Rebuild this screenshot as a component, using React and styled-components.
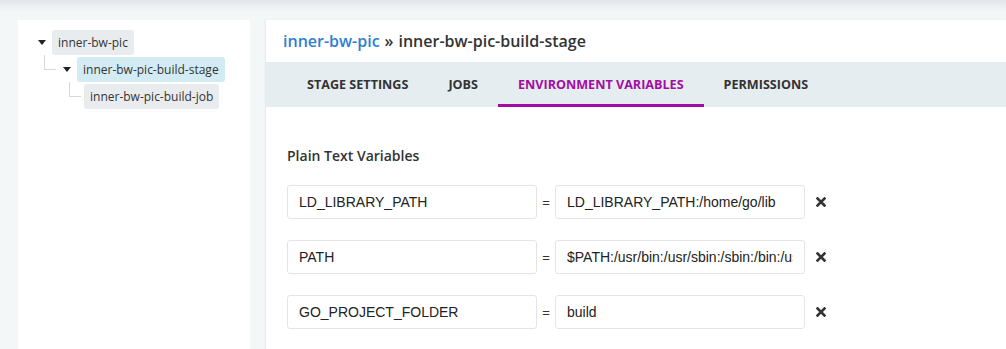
import React from 'react';
import styled, {createGlobalStyle} from 'styled-components';

const GlobalStyle = createGlobalStyle`
    html, body {
        margin: 0;
        padding: 0;
        background: #f4f7f8;
        font-family: "Open Sans", sans-serif;
        color: #333;
    }
`

const Page = styled.div`
    min-height: 349px;
    background: #f4f7f8;
    display: flex;
    flex-direction: column;
`

const TopShade = styled.div`
    height: 20px;
    background: linear-gradient(to bottom, #e3e6e8 0px, #f4f7f8 12px);
`

const Columns = styled.div`
    flex: 1;
    display: flex;
    gap: 16px;
    padding-left: 18px;
`

const Sidebar = styled.div`
    width: 232px;
    min-height: 329px;
    background: #fff;
    padding: 10px 0 0 20px;
    box-sizing: border-box;
`

const Tree = styled.ul`
    list-style: none;
    margin: 0;
    padding: 0;
`

const Node = styled.li`
    position: relative;
    padding-left: ${p => p.$indent}px;
    margin-top: ${p => p.$top}px;
`

const Row = styled.div`
    display: flex;
    align-items: center;
    gap: 6px;
`

const Caret = styled.span`
    width: 0;
    height: 0;
    border-left: 4px solid transparent;
    border-right: 4px solid transparent;
    border-top: 5px solid #222;
`

const Label = styled.span`
    display: inline-block;
    white-space: nowrap;
    font-size: 12px;
    line-height: 25px;
    padding: 0 6px;
    border-radius: 3px;
    color: #333;
    background: ${p => p.$selected ? '#d3ebf2' : '#e9ecef'};
`

const Connector = styled.span`
    position: absolute;
    left: ${p => p.$left}px;
    top: -2px;
    width: 11px;
    height: 14px;
    border-left: 1px solid #d5d9dc;
    border-bottom: 1px solid #d5d9dc;
`

const Main = styled.div`
    flex: 1;
    background: #fff;
    box-shadow: -1px 0 2px rgba(0,0,0,0.06);
`

const Title = styled.h1`
    margin: 0;
    height: 42px;
    display: flex;
    align-items: center;
    padding-left: 17px;
    font-size: 16px;
    font-weight: 600;
    color: #333;
    gap: 5px;
`

const Crumb = styled.span`
    color: #2e7fd4;
`

const Tabs = styled.div`
    display: flex;
    height: 45px;
    background: #e6edf0;
    padding-left: 21px;
`

const Tab = styled.div`
    padding: 0 20px;
    display: flex;
    align-items: center;
    font-size: 12.6px;
    font-weight: 700;
    text-transform: uppercase;
    color: ${p => p.$active ? '#a30ca4' : '#333'};
    border-bottom: 3px solid ${p => p.$active ? '#a30ca4' : 'transparent'};
    padding-top: 2px;
    box-sizing: border-box;
`

const Body = styled.div`
    padding: 37px 21px 0 21px;
`

const SectionTitle = styled.h3`
    margin: 0 0 17px 0;
    font-size: 14px;
    font-weight: 600;
    color: #333;
    line-height: 24px;
`

const VarRow = styled.div`
    display: flex;
    align-items: center;
    margin-bottom: 21px;
`

const Field = styled.input`
    width: 250px;
    height: 34px;
    box-sizing: border-box;
    border: 1px solid #e2e4e6;
    border-radius: 3px;
    padding: 0 11px;
    font-family: "Liberation Sans", Arial, sans-serif;
    font-size: 14px;
    color: #222;
    outline: none;
`

const Equals = styled.span`
    width: 18px;
    text-align: center;
    font-family: "Liberation Sans", Arial, sans-serif;
    font-size: 13px;
    color: #333;
`

const Remove = styled.button`
    border: 0;
    background: none;
    padding: 0;
    margin-left: 11px;
    width: 10px;
    height: 10px;
    display: flex;
    cursor: pointer;
`

const CloseIcon = () => (
    <svg width="10" height="10" viewBox="0 0 10 10">
        <path d="M1.5 1.5 L8.5 8.5 M8.5 1.5 L1.5 8.5" stroke="#333" strokeWidth="2.6" strokeLinecap="square"/>
    </svg>
)

const vars = [
    {name: 'LD_LIBRARY_PATH', value: 'LD_LIBRARY_PATH:/home/go/lib'},
    {name: 'PATH', value: '$PATH:/usr/bin:/usr/sbin:/sbin:/bin:/usr/local/bin'},
    {name: 'GO_PROJECT_FOLDER', value: 'build'},
]

const tabs = ['Stage Settings', 'Jobs', 'Environment Variables', 'Permissions']

export default function App() {
    return (
        <Page>
            <GlobalStyle/>
            <TopShade/>
            <Columns>
                <Sidebar>
                    <Tree>
                        <Node $indent={0} $top={0}>
                            <Row><Caret/><Label>inner-bw-pic</Label></Row>
                            <Tree>
                                <Node $indent={25} $top={2}>
                                    <Connector $left={6}/>
                                    <Row><Caret/><Label $selected>inner-bw-pic-build-stage</Label></Row>
                                    <Tree>
                                        <Node $indent={21} $top={2}>
                                            <Connector $left={6}/>
                                            <Row><Label>inner-bw-pic-build-job</Label></Row>
                                        </Node>
                                    </Tree>
                                </Node>
                            </Tree>
                        </Node>
                    </Tree>
                </Sidebar>
                <Main>
                    <Title>
                        <Crumb>inner-bw-pic</Crumb>
                        <span>»</span>
                        <span>inner-bw-pic-build-stage</span>
                    </Title>
                    <Tabs>
                        {tabs.map(t => (
                            <Tab key={t} $active={t === 'Environment Variables'}>{t}</Tab>
                        ))}
                    </Tabs>
                    <Body>
                        <SectionTitle>Plain Text Variables</SectionTitle>
                        {vars.map(v => (
                            <VarRow key={v.name}>
                                <Field defaultValue={v.name}/>
                                <Equals>=</Equals>
                                <Field defaultValue={v.value}/>
                                <Remove><CloseIcon/></Remove>
                            </VarRow>
                        ))}
                    </Body>
                </Main>
            </Columns>
        </Page>
    )
}
